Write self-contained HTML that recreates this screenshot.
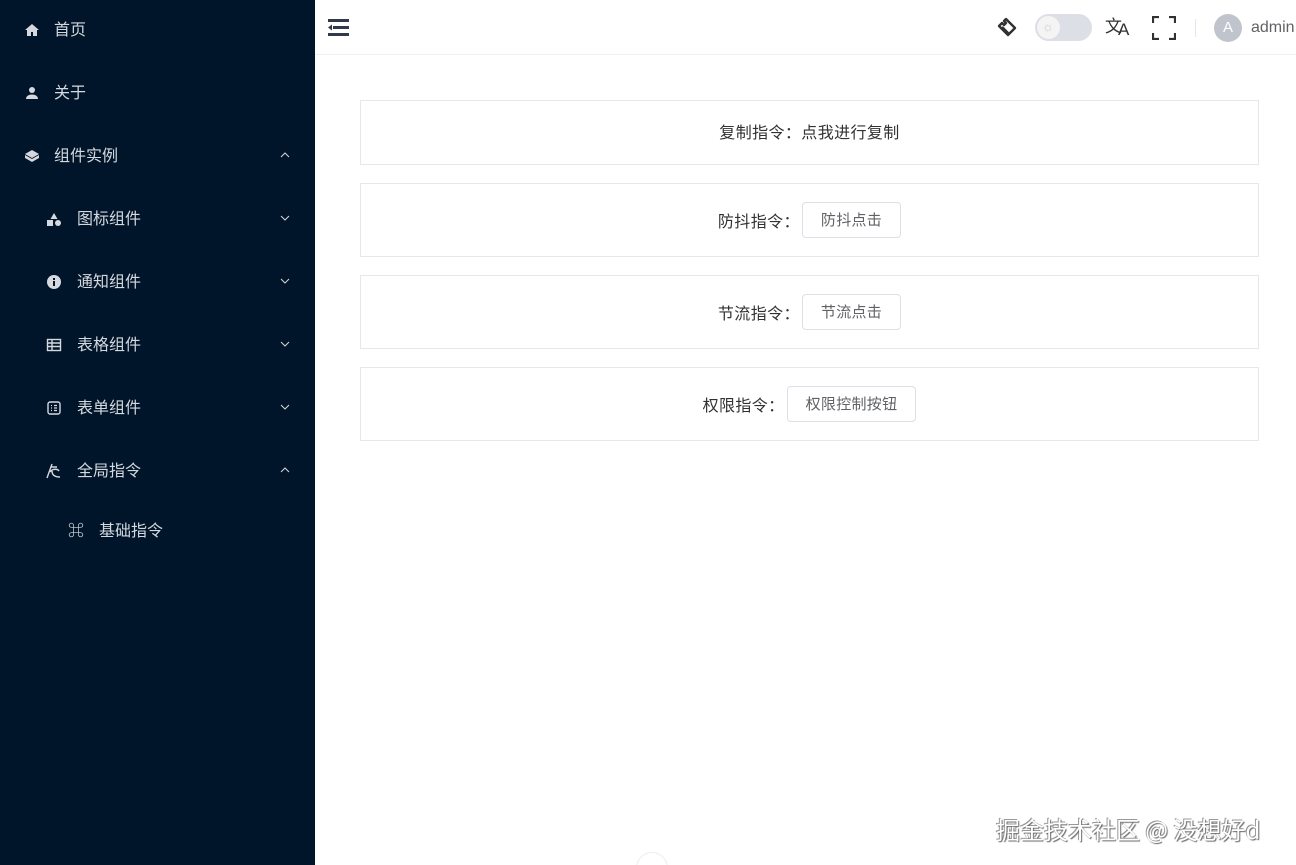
<!DOCTYPE html>
<html><head><meta charset="utf-8"><style>
*{margin:0;padding:0;box-sizing:border-box}
html,body{width:1296px;height:865px;overflow:hidden}
body{background:#fff;font-family:"Noto Sans CJK SC","Liberation Sans",sans-serif;position:relative}
.side{position:absolute;left:0;top:0;width:315px;height:865px;background:#001529}
.mi{position:absolute;left:0;width:315px;height:40px;color:#d5d9df;font-size:16px;line-height:40px}
.mi .ic{position:absolute;top:12px;width:16px;height:16px}
.mi .t{position:absolute;top:-2px}
.mi .ar{position:absolute;left:280px;top:15px}
.top{position:absolute;left:315px;top:0;right:0;height:55px;border-bottom:1px solid #f0f0f0}
.card{position:absolute;left:360px;width:899px;border:1px solid #e4e7ed;display:flex;align-items:center;justify-content:center;font-size:16px;color:#303133;letter-spacing:0.4px}
.btn{display:inline-block;border:1px solid #dcdfe6;border-radius:4px;height:36px;line-height:33px;padding:0 18px;font-size:15px;color:#606266;margin-left:2px;letter-spacing:0.3px}
</style></head><body>
<div class="side">
 <div class="mi" style="top:10px"><svg class="ic" style="left:24px" viewBox="0 0 16 16"><path d="M8 2L1 8h2v6h4v-4h2v4h4V8h2z" fill="#d5d9df"/></svg><span class="t" style="left:54px">首页</span></div>
 <div class="mi" style="top:73px"><svg class="ic" style="left:24px" viewBox="0 0 16 16"><circle cx="8" cy="5" r="3" fill="#d5d9df"/><path d="M2 14c0-3 3-4.5 6-4.5s6 1.5 6 4.5z" fill="#d5d9df"/></svg><span class="t" style="left:54px">关于</span></div>
 <div class="mi" style="top:136px"><svg class="ic" style="left:24px" viewBox="0 0 16 16"><path d="M8 2l7 4-7 4-7-4z" fill="#d5d9df"/><path d="M1 7v3l7 4 7-4V7l-7 4z" fill="#d5d9df"/></svg><span class="t" style="left:54px">组件实例</span><svg class="ar" width="10" height="8" viewBox="0 0 10 8"><path d="M1 6l4-4 4 4" stroke="#d5d9df" fill="none"/></svg></div>
 <div class="mi" style="top:199px"><svg class="ic" style="left:46px" viewBox="0 0 16 16"><path d="M8 2l3.5 6h-7z" fill="#d5d9df"/><rect x="1" y="9" width="6" height="6" fill="#d5d9df"/><circle cx="12" cy="12" r="3" fill="#d5d9df"/></svg><span class="t" style="left:77px">图标组件</span><svg class="ar" width="10" height="8" viewBox="0 0 10 8"><path d="M1 2l4 4 4-4" stroke="#d5d9df" fill="none"/></svg></div>
 <div class="mi" style="top:262px"><svg class="ic" style="left:46px" viewBox="0 0 16 16"><circle cx="8" cy="8" r="7" fill="#d5d9df"/><rect x="7" y="7" width="2" height="5" fill="#001529"/><rect x="7" y="4" width="2" height="2" fill="#001529"/></svg><span class="t" style="left:77px">通知组件</span><svg class="ar" width="10" height="8" viewBox="0 0 10 8"><path d="M1 2l4 4 4-4" stroke="#d5d9df" fill="none"/></svg></div>
 <div class="mi" style="top:325px"><svg class="ic" style="left:46px" viewBox="0 0 16 16"><rect x="1.5" y="2.5" width="13" height="11" stroke="#d5d9df" fill="none" stroke-width="1.4"/><path d="M1.5 6h13M1.5 9.5h13M6 2.5v11" stroke="#d5d9df" stroke-width="1.4"/></svg><span class="t" style="left:77px">表格组件</span><svg class="ar" width="10" height="8" viewBox="0 0 10 8"><path d="M1 2l4 4 4-4" stroke="#d5d9df" fill="none"/></svg></div>
 <div class="mi" style="top:388px"><svg class="ic" style="left:46px" viewBox="0 0 16 16"><rect x="2" y="2" width="12" height="12" rx="2" stroke="#d5d9df" fill="none" stroke-width="1.4"/><path d="M5 5.5h1M8 5.5h3M5 8h1M8 8h3M5 10.5h1M8 10.5h3" stroke="#d5d9df" stroke-width="1.3"/></svg><span class="t" style="left:77px">表单组件</span><svg class="ar" width="10" height="8" viewBox="0 0 10 8"><path d="M1 2l4 4 4-4" stroke="#d5d9df" fill="none"/></svg></div>
 <div class="mi" style="top:451px"><svg class="ic" style="left:46px" viewBox="0 0 16 16"><path d="M6 1L1 15M5 4h6M4 9c3-4 8-3 9-1M6 8c0 4 3 6 8 6" stroke="#d5d9df" fill="none" stroke-width="1.4"/></svg><span class="t" style="left:77px">全局指令</span><svg class="ar" width="10" height="8" viewBox="0 0 10 8"><path d="M1 6l4-4 4 4" stroke="#d5d9df" fill="none"/></svg></div>
 <div class="mi" style="top:511px"><span class="t" style="left:68px;font-size:16px;font-weight:bold">⌘</span><span class="t" style="left:99px">基础指令</span></div>
</div>
<div class="top">
 <svg style="position:absolute;left:13px;top:18px" width="21" height="18" viewBox="0 0 21 18"><rect x="0" y="1" width="21" height="3" fill="#303a4a"/><rect x="5" y="8" width="16" height="3" fill="#303a4a"/><path d="M0 9.5l4-3v6z" fill="#303a4a"/><rect x="0" y="15" width="21" height="3" fill="#303a4a"/></svg>
 <svg style="position:absolute;left:681px;top:16px" width="24" height="24" viewBox="0 0 24 24"><path d="M10 3l9 9-7 7-9-9 3-3 2 2 2-2-2-2z M6 11l7 7" stroke="#303133" stroke-width="2.4" fill="none" stroke-linejoin="round"/></svg>
 <div style="position:absolute;left:720px;top:14px;width:57px;height:27px;border-radius:14px;background:#dcdfe6"><div style="position:absolute;left:2px;top:2px;width:23px;height:23px;border-radius:50%;background:#f4f4f5"></div><span style="position:absolute;left:7px;top:2px;font-size:13px;color:#ccc">☼</span></div>
 <span style="position:absolute;left:790px;top:12px;font-size:17px;color:#303133">文</span><span style="position:absolute;left:803px;top:20px;font-size:17px;color:#303133;font-family:'Liberation Sans'">A</span>
 <svg style="position:absolute;left:837px;top:16px" width="24" height="24" viewBox="0 0 24 24"><path d="M1 7V1h6M17 1h6v6M23 17v6h-6M7 23H1v-6" stroke="#303133" stroke-width="2.2" fill="none"/></svg>
 <div style="position:absolute;left:880px;top:19px;width:1px;height:18px;background:#e4e7ed"></div>
 <div style="position:absolute;left:899px;top:14px;width:28px;height:28px;border-radius:50%;background:#c0c4cc;color:#fff;text-align:center;line-height:28px;font-size:15px;font-family:'Liberation Sans'">A</div>
 <span style="position:absolute;left:936px;top:19px;font-size:16px;color:#606266;font-family:'Liberation Sans'">admin</span>
</div>
<div class="card" style="top:100px;height:65px;padding-bottom:4px">复制指令：点我进行复制</div>
<div class="card" style="top:183px;height:74px">防抖指令：<span class="btn">防抖点击</span></div>
<div class="card" style="top:275px;height:74px">节流指令：<span class="btn">节流点击</span></div>
<div class="card" style="top:367px;height:74px">权限指令：<span class="btn">权限控制按钮</span></div>
<div style="position:absolute;left:996px;top:811px;font-size:24px;color:#fff;text-shadow:1px 1px 1px #666,-1px -1px 0 #999">掘金技术社区 @ 没想好d</div>
<div style="position:absolute;left:636px;top:852px;width:32px;height:32px;border-radius:50%;border:1px solid #eee"></div>
</body></html>
